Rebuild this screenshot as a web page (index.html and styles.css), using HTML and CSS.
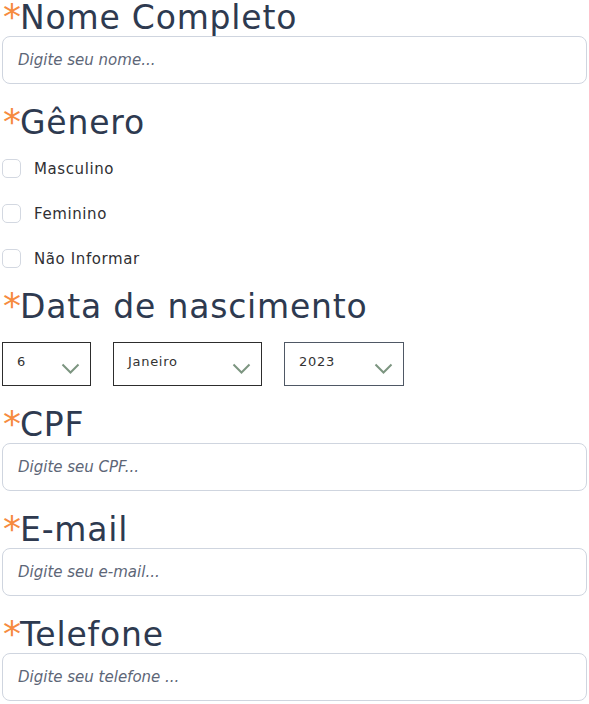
FILE: index.html
```html
<!DOCTYPE html>
<html lang="pt-BR">
<head>
<meta charset="utf-8">
<title>Cadastro</title>
<link rel="stylesheet" href="styles.css">
</head>
<body>
<form class="form">
  <div class="field">
    <h2 class="label"><span class="req">*</span>Nome Completo</h2>
    <input class="text-input" type="text" placeholder="Digite seu nome...">
  </div>

  <div class="field">
    <h2 class="label"><span class="req">*</span>Gênero</h2>
    <div class="checks">
      <label class="check"><span class="box"></span><span class="check-text">Masculino</span></label>
      <label class="check"><span class="box"></span><span class="check-text">Feminino</span></label>
      <label class="check"><span class="box"></span><span class="check-text">Não Informar</span></label>
    </div>
  </div>

  <div class="field">
    <h2 class="label"><span class="req">*</span>Data de nascimento</h2>
    <div class="selects">
      <div class="select select-day"><span class="select-text">6</span>
        <svg class="chev" width="19" height="11" viewBox="0 0 19 11"><polyline points="1.5,1.5 9.5,9.5 17.5,1.5" fill="none" stroke="#7c9580" stroke-width="2"/></svg></div>
      <div class="select select-month"><span class="select-text">Janeiro</span>
        <svg class="chev" width="19" height="11" viewBox="0 0 19 11"><polyline points="1.5,1.5 9.5,9.5 17.5,1.5" fill="none" stroke="#7c9580" stroke-width="2"/></svg></div>
      <div class="select select-year"><span class="select-text">2023</span>
        <svg class="chev" width="19" height="11" viewBox="0 0 19 11"><polyline points="1.5,1.5 9.5,9.5 17.5,1.5" fill="none" stroke="#7c9580" stroke-width="2"/></svg></div>
    </div>
  </div>

  <div class="field">
    <h2 class="label"><span class="req">*</span>CPF</h2>
    <input class="text-input" type="text" placeholder="Digite seu CPF...">
  </div>

  <div class="field">
    <h2 class="label"><span class="req">*</span>E-mail</h2>
    <input class="text-input" type="text" placeholder="Digite seu e-mail...">
  </div>

  <div class="field">
    <h2 class="label"><span class="req">*</span>Telefone</h2>
    <input class="text-input" type="text" placeholder="Digite seu telefone ...">
  </div>
</form>
</body>
</html>
```

FILE: styles.css
```css
* { box-sizing: border-box; }

html, body {
  margin: 0;
  padding: 0;
  background: #ffffff;
}

body {
  font-family: "DejaVu Sans", "Noto Sans", sans-serif;
  overflow: hidden;
}

.form {
  display: flex;
  flex-direction: column;
  gap: 21px;
  padding: 0 2px;
}

.field {
  display: flex;
  flex-direction: column;
}

.label {
  margin: 0;
  font-size: 33px;
  line-height: 36px;
  font-weight: 500;
  letter-spacing: 0.8px;
  color: #2e3a50;
  white-space: nowrap;
}

.req {
  display: inline-block;
  width: 18px;
  color: #f68b3f;
  font-size: 36px;
  line-height: 36px;
  letter-spacing: 0;
  vertical-align: top;
  position: relative;
  top: -1px;
  left: 1px;
}

.text-input {
  display: block;
  width: 100%;
  height: 48px;
  border: 1px solid #cfd5df;
  border-radius: 8px;
  padding: 0 15px;
  font-family: inherit;
  font-size: 15px;
  font-style: italic;
  color: #2e3a50;
  background: #fff;
  outline: none;
}

.text-input::placeholder {
  color: #5d6677;
  opacity: 1;
}

.checks {
  margin-top: 18px;
  display: flex;
  flex-direction: column;
  gap: 26px;
}

.check {
  display: flex;
  align-items: center;
  height: 19px;
}

.box {
  width: 19px;
  height: 19px;
  border: 1px solid #d3d8e1;
  border-radius: 5px;
  background: #fff;
  flex: none;
}

.check-text {
  margin-left: 13px;
  font-size: 15px;
  letter-spacing: 0.6px;
  color: #2f2f33;
}

.selects {
  margin-top: 17px;
  display: flex;
  gap: 22px;
}

.select {
  height: 44px;
  border: 1px solid #2d2d2d;
  display: flex;
  justify-content: space-between;
  padding: 11px 10px 0 14px;
}

.select-day { width: 89px; }
.select-month { width: 149px; }
.select-year { width: 120px; border-color: #4f5865; }

.select-text {
  font-size: 13px;
  line-height: 16px;
  letter-spacing: 0.7px;
  color: #333;
}

.chev {
  margin-top: 9px;
  flex: none;
}
```
